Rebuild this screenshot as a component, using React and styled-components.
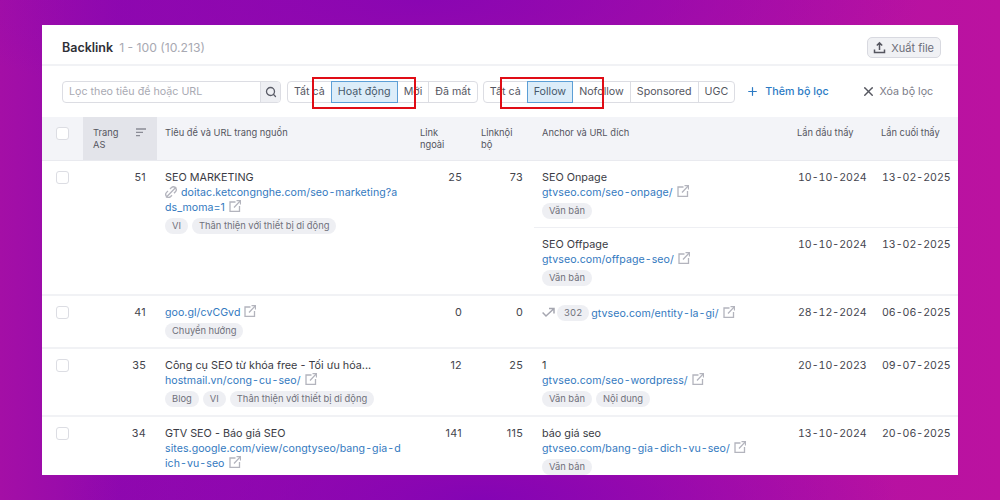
import React from 'react'
import styled, { createGlobalStyle } from 'styled-components'
import { Search, X, Plus } from 'lucide-react'

const GlobalStyle = createGlobalStyle`
    html, body {
        margin: 0;
        padding: 0;
    }
    body {
        font-family: Inter, "Noto Sans", sans-serif;
        font-size: 10.8px;
        color: #333;
    }
`

const Page = styled.div`
    width: 1000px;
    height: 500px;
    box-sizing: border-box;
    padding: 25px 42px;
    overflow: hidden;
    background:
        radial-gradient(ellipse 420px 120px at 480px 500px, #8404b4 0%, rgba(132, 4, 180, 0) 100%),
        radial-gradient(ellipse 500px 120px at 420px 0, #8a06b2 0%, rgba(138, 6, 178, 0) 100%),
        linear-gradient(90deg, #a40fa6 0%, #9008ae 12%, #b210a4 70%, #bb12a0 100%);
`

const Card = styled.div`
    position: relative;
    width: 916px;
    height: 450px;
    overflow: hidden;
    background: #fff;
`

const Header = styled.div`
    display: flex;
    align-items: center;
    justify-content: space-between;
    height: 41px;
    box-sizing: border-box;
    padding: 6px 17px 0 20px;
    border-bottom: 2px solid #f1f2f5;
`

const TitleLine = styled.div`
    display: flex;
    align-items: baseline;
    gap: 6px;
`

const Title = styled.span`
    font-size: 12.5px;
    font-weight: 600;
    color: #2f2f37;
`

const Count = styled.span`
    font-size: 12.2px;
    color: #a8a9b2;
`

const ExportButton = styled.div`
    display: flex;
    align-items: center;
    gap: 5px;
    height: 21px;
    box-sizing: border-box;
    padding: 0 6px 0 5px;
    border: 1px solid #d8d9e0;
    border-radius: 5px;
    background: #f0f1f4;
    color: #6c6e79;
    font-size: 11px;
`

const FilterBar = styled.div`
    display: flex;
    align-items: center;
    height: 51px;
    padding: 0 0 0 20px;
    font-size: 10.7px;
    white-space: nowrap;
`

const SearchBox = styled.div`
    display: flex;
    flex: none;
    width: 219px;
    height: 22px;
    box-sizing: border-box;
    border: 1px solid #dcdde3;
    border-radius: 4px;
    overflow: hidden;
    margin-right: 6px;
`

const SearchText = styled.div`
    flex: 1;
    padding-left: 6px;
    line-height: 20px;
    color: #a9aab3;
`

const SearchButton = styled.div`
    display: flex;
    align-items: center;
    justify-content: center;
    width: 19px;
    background: #eeeff3;
    border-left: 1px solid #dcdde3;
    color: #5a5c67;
`

const Segments = styled.div`
    display: flex;
    flex: none;
    height: 22px;
    box-sizing: border-box;
    border: 1px solid #dcdde3;
    border-radius: 4px;
    margin-right: 5px;
`

const Segment = styled.div`
    box-sizing: border-box;
    height: 20px;
    padding: 0 6px;
    line-height: 20px;
    color: #55565f;
    border-left: 1px solid #dcdde3;
    ${p => p.$plain && 'border-left: 0;'}
    ${p => p.$active && `
        height: 22px;
        margin: -1px 0;
        background: #dcedf9;
        border: 1px solid #5c9fd6;
        color: #47596b;
    `}
`

const AddFilter = styled.div`
    display: flex;
    align-items: center;
    gap: 6px;
    margin-left: 6px;
    color: #2b7ac4;
    font-weight: 500;
`

const ClearFilter = styled.div`
    display: flex;
    align-items: center;
    gap: 4px;
    margin-left: 32px;
    color: #7b7c87;
`

const Row = styled.div`
    display: grid;
    grid-template-columns: 41px 74px 255px 61px 61px 1fr;
    min-height: ${p => p.$height || 0}px;
    border-bottom: 2px solid #f1f2f5;
`

const HeadRow = styled(Row)`
    height: 44px;
    box-sizing: border-box;
    background: #f3f4f8;
    border-bottom: 1px solid #e9eaef;
    color: #55565f;
    font-size: 9.3px;
    line-height: 12.3px;
`

const HeadCell = styled.div`
    padding: 10px 8px 0;
    white-space: pre-line;
`

const SortCell = styled(HeadCell)`
    display: flex;
    justify-content: space-between;
    padding: 10px 10px 0 10px;
    background: #e3e4ea;
`

const CheckCell = styled.div`
    padding: 10px 0 0 14px;
`

const CheckBox = styled.div`
    width: 13px;
    height: 13px;
    box-sizing: border-box;
    background: #fff;
    border: 1px solid #dcdde3;
    border-radius: 3px;
`

const NumCell = styled.div`
    padding: 9px 11px 0 0;
    text-align: right;
    line-height: 15px;
    letter-spacing: 0.3px;
    color: #44454e;
`

const ContentCell = styled.div`
    padding: 9px 8px 6px;
    line-height: 15px;
    min-width: 0;
    white-space: nowrap;
`

const Heading = styled.div`
    color: #3a3b44;
`

const LinkLine = styled.div`
    color: #3379c0;
    font-size: 10.6px;
    letter-spacing: 0.05px;
`

const Dash = styled.span`
    margin: 0 1px;
`

const IconSvg = styled.svg`
    display: inline-block;
    width: 12px;
    height: 12px;
    margin-left: 4px;
    vertical-align: -1px;
    fill: none;
    stroke: #b3b4bd;
    stroke-width: 1.3;
`

const BrokenSvg = styled(IconSvg)`
    margin: 0 4px 0 0;
    vertical-align: -2px;
`

const Tags = styled.div`
    display: flex;
    gap: 4px;
    margin-top: 3px;
`

const Tag = styled.span`
    height: 16px;
    padding: 0 7px;
    border-radius: 8px;
    background: #eeeff3;
    color: #70717b;
    font-size: 9.4px;
    line-height: 16px;
    white-space: nowrap;
    font-variant-numeric: tabular-nums;
`

const AnchorGroup = styled.div`
    display: flex;
    flex-direction: column;
`

const AnchorRow = styled.div`
    display: grid;
    grid-template-columns: 255px 84px 1fr;
    min-height: ${p => p.$height || 0}px;
    & + & {
        border-top: 1px solid #eeeff3;
    }
`

const DateCell = styled.div`
    padding: 9px 0 0 9px;
    font-size: 10.6px;
    line-height: 15px;
    white-space: nowrap;
    color: #44454e;
    font-variant-numeric: tabular-nums;
`

const RedirectLine = styled.div`
    display: flex;
    align-items: center;
    gap: 2px;
`

const Frame = styled.div`
    position: absolute;
    top: 52px;
    left: ${p => p.$left}px;
    width: 104px;
    height: 32px;
    box-sizing: border-box;
    border: 2px solid #e00d16;
`

const SortIcon = styled.svg`
    margin-top: 1px;
    fill: none;
    stroke: #8a8b95;
    stroke-width: 1.3;
`

const UploadIcon = () => (
    <svg width="13" height="13" viewBox="0 0 13 13" fill="none" stroke="#55565f" strokeWidth="1.5">
        <path d="M6.500 9V2M3.800 4.500l2.700-2.700 2.700 2.700M1.500 8.500v3h10v-3" />
    </svg>
)

const RedirectIcon = () => (
    <svg width="13" height="12" viewBox="0 0 13 12" fill="none" stroke="#a5a6b0" strokeWidth="1.5">
        <path d="M.6 5.500L4 9l7.500-7M7 1.500h5v5" />
    </svg>
)

const ExternalIcon = () => (
    <IconSvg viewBox="0 0 12 12">
        <path d="M6.500 2H1v9.500h9.500V6M5 7.500L11.500.6M7.500.6h4v4" />
    </IconSvg>
)

const BrokenIcon = () => (
    <BrokenSvg viewBox="0 0 12 12">
        <path d="M5 3l1.300-1.300a2.900 2.900 0 0 1 4.100 4.100L9 7.300M7 9.200L5.700 10.500a2.900 2.900 0 0 1-4.100-4.100L3 5M1 11.500L11.200 1" />
    </BrokenSvg>
)

// hyphens sit wider in the urls than the font gives them
const dashed = (text) =>
    text.split('-').map((part, i) => (
        <React.Fragment key={i}>{i > 0 && <Dash>-</Dash>}{part}</React.Fragment>
    ))

const Anchor = ({ text, url, tags, first, last, height }) => (
    <AnchorRow $height={height}>
        <ContentCell>
            <Heading>{text}</Heading>
            <LinkLine>{dashed(url)}<ExternalIcon /></LinkLine>
            <Tags>{tags.map(t => <Tag key={t}>{t}</Tag>)}</Tags>
        </ContentCell>
        <DateCell>{first}</DateCell>
        <DateCell>{last}</DateCell>
    </AnchorRow>
)

export default function App() {
    return (
        <Page>
            <GlobalStyle />
            <Card>
                <Header>
                    <TitleLine>
                        <Title>Backlink</Title>
                        <Count>1 - 100 (10.213)</Count>
                    </TitleLine>
                    <ExportButton><UploadIcon />Xuất file</ExportButton>
                </Header>
                <FilterBar>
                    <SearchBox>
                        <SearchText>Lọc theo tiêu đề hoặc URL</SearchText>
                        <SearchButton><Search size={12} strokeWidth={2.6} /></SearchButton>
                    </SearchBox>
                    <Segments>
                        <Segment $plain>Tất cả</Segment>
                        <Segment $active>Hoạt động</Segment>
                        <Segment $plain>Mới</Segment>
                        <Segment>Đã mất</Segment>
                    </Segments>
                    <Segments>
                        <Segment $plain>Tất cả</Segment>
                        <Segment $active>Follow</Segment>
                        <Segment $plain>Nofollow</Segment>
                        <Segment>Sponsored</Segment>
                        <Segment>UGC</Segment>
                    </Segments>
                    <AddFilter><Plus size={13} strokeWidth={2.2} />Thêm bộ lọc</AddFilter>
                    <ClearFilter><X size={15} strokeWidth={2.2} color="#55565f" />Xóa bộ lọc</ClearFilter>
                </FilterBar>
                <HeadRow>
                    <CheckCell><CheckBox /></CheckCell>
                    <SortCell>
                        {'Trang\nAS'}
                        <SortIcon width="11" height="9" viewBox="0 0 11 9">
                            <path d="M0 1h10M0 4.300h7M0 7.600h4" />
                        </SortIcon>
                    </SortCell>
                    <HeadCell>Tiêu đề và URL trang nguồn</HeadCell>
                    <HeadCell>{'Link\nngoài'}</HeadCell>
                    <HeadCell>{'Linknội\nbộ'}</HeadCell>
                    <AnchorRow>
                        <HeadCell>Anchor và URL đích</HeadCell>
                        <HeadCell>Lần đầu thấy</HeadCell>
                        <HeadCell>Lần cuối thấy</HeadCell>
                    </AnchorRow>
                </HeadRow>
                <Row>
                    <CheckCell><CheckBox /></CheckCell>
                    <NumCell>51</NumCell>
                    <ContentCell>
                        <Heading>SEO MARKETING</Heading>
                        <LinkLine><BrokenIcon />{dashed('doitac.ketcongnghe.com/seo-marketing?a')}</LinkLine>
                        <LinkLine>ds_moma=1<ExternalIcon /></LinkLine>
                        <Tags><Tag>VI</Tag><Tag>Thân thiện với thiết bị di động</Tag></Tags>
                    </ContentCell>
                    <NumCell>25</NumCell>
                    <NumCell>73</NumCell>
                    <AnchorGroup>
                        <Anchor text="SEO Onpage" url="gtvseo.com/seo-onpage/" tags={['Văn bản']} first="10-10-2024" last="13-02-2025" height={66} />
                        <Anchor text="SEO Offpage" url="gtvseo.com/offpage-seo/" tags={['Văn bản']} first="10-10-2024" last="13-02-2025" height={66} />
                    </AnchorGroup>
                </Row>
                <Row $height={51}>
                    <CheckCell><CheckBox /></CheckCell>
                    <NumCell>41</NumCell>
                    <ContentCell>
                        <LinkLine>goo.gl/cvCGvd<ExternalIcon /></LinkLine>
                        <Tags><Tag>Chuyển hướng</Tag></Tags>
                    </ContentCell>
                    <NumCell>0</NumCell>
                    <NumCell>0</NumCell>
                    <AnchorRow>
                        <ContentCell>
                            <RedirectLine>
                                <RedirectIcon />
                                <Tag>302</Tag>
                                <LinkLine>{dashed('gtvseo.com/entity-la-gi/')}<ExternalIcon /></LinkLine>
                            </RedirectLine>
                        </ContentCell>
                        <DateCell>28-12-2024</DateCell>
                        <DateCell>06-06-2025</DateCell>
                    </AnchorRow>
                </Row>
                <Row $height={66}>
                    <CheckCell><CheckBox /></CheckCell>
                    <NumCell>35</NumCell>
                    <ContentCell>
                        <Heading>Công cụ SEO từ khóa free - Tối ưu hóa...</Heading>
                        <LinkLine>{dashed('hostmail.vn/cong-cu-seo/')}<ExternalIcon /></LinkLine>
                        <Tags><Tag>Blog</Tag><Tag>VI</Tag><Tag>Thân thiện với thiết bị di động</Tag></Tags>
                    </ContentCell>
                    <NumCell>12</NumCell>
                    <NumCell>25</NumCell>
                    <Anchor text="1" url="gtvseo.com/seo-wordpress/" tags={['Văn bản', 'Nội dung']} first="20-10-2023" last="09-07-2025" />
                </Row>
                <Row>
                    <CheckCell><CheckBox /></CheckCell>
                    <NumCell>34</NumCell>
                    <ContentCell>
                        <Heading>GTV SEO - Báo giá SEO</Heading>
                        <LinkLine>{dashed('sites.google.com/view/congtyseo/bang-gia-d')}</LinkLine>
                        <LinkLine>{dashed('ich-vu-seo')}<ExternalIcon /></LinkLine>
                    </ContentCell>
                    <NumCell>141</NumCell>
                    <NumCell>115</NumCell>
                    <Anchor text="báo giá seo" url="gtvseo.com/bang-gia-dich-vu-seo/" tags={['Văn bản']} first="13-10-2024" last="20-06-2025" />
                </Row>
                <Frame $left={270} />
                <Frame $left={458} />
            </Card>
        </Page>
    )
}
